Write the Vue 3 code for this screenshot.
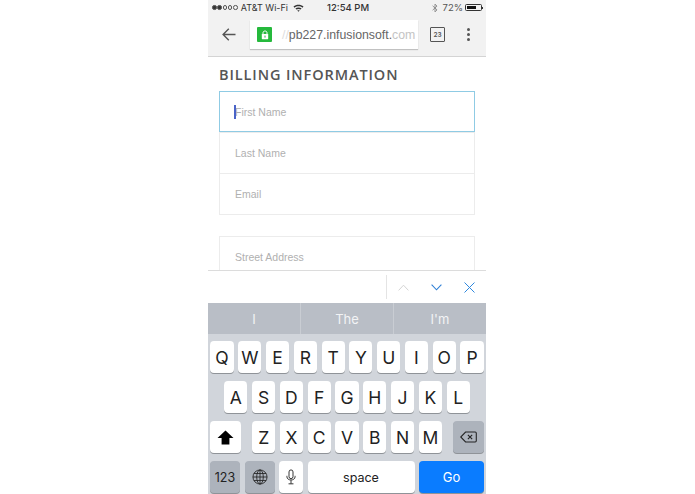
<script setup>
const rowOne = ['Q', 'W', 'E', 'R', 'T', 'Y', 'U', 'I', 'O', 'P']
const rowTwo = ['A', 'S', 'D', 'F', 'G', 'H', 'J', 'K', 'L']
const rowThree = ['Z', 'X', 'C', 'V', 'B', 'N', 'M']
const suggestions = ['I', 'The', "I'm"]
</script>

<template>
  <div class="page">
    <div class="phone">
      <div class="status">
        <div class="status-left">
          <span class="dots"><i class="on"></i><i class="on"></i><i></i><i></i><i></i></span>
          <span>AT&amp;T Wi-Fi</span>
          <svg class="wifi" width="11" height="8" viewBox="0 0 11 8">
            <path d="M0.5 2.6C3.3 0.2 7.7 0.2 10.5 2.6L9.5 3.7C7.2 1.8 3.8 1.8 1.5 3.7Z" fill="#333"/>
            <path d="M2.4 4.6C4 3.2 7 3.2 8.6 4.6L7.6 5.6C6.4 4.7 4.6 4.7 3.4 5.6Z" fill="#333"/>
            <path d="M4.3 6.5C5 6 6 6 6.7 6.5L5.5 7.8Z" fill="#333"/>
          </svg>
        </div>
        <div class="status-time">12:54 PM</div>
        <div class="status-right">
          <svg width="6" height="10" viewBox="0 0 6 10" fill="none" stroke="#888" stroke-width="0.9">
            <path d="M0.6 2.8L5 6.9L3 8.9V1.1L5 3.1L0.6 7.2"/>
          </svg>
          <span>72%</span>
          <span class="battery"><span class="battery-fill"></span></span>
        </div>
      </div>

      <div class="toolbar">
        <svg class="back" width="14" height="13" viewBox="0 0 14 13" fill="none" stroke="#555" stroke-width="1.4">
          <path d="M13.5 6.5H1.2M6.8 0.8L1.1 6.5L6.8 12.2"/>
        </svg>
        <div class="url">
          <span class="lock">
            <svg width="8" height="10" viewBox="0 0 8 10">
              <path d="M2 4.2V2.8C2 0.4 6 0.4 6 2.8V4.2" fill="none" stroke="#fff" stroke-width="1"/>
              <rect x="0.8" y="4" width="6.4" height="5.2" rx="0.6" fill="#fff"/>
              <rect x="3.5" y="5.6" width="1" height="2" fill="#25b93c"/>
            </svg>
          </span>
          <span class="url-text"><span class="url-slashes">//</span>pb227.infusionsoft.<span class="url-fade">com</span></span>
        </div>
        <span class="tabs">23</span>
        <span class="menu"><i></i><i></i><i></i></span>
      </div>

      <div class="content">
        <h2 class="title">BILLING INFORMATION</h2>
        <div class="group">
          <div class="field focused"><span class="caret"></span>First Name</div>
          <div class="field">Last Name</div>
          <div class="field">Email</div>
        </div>
        <div class="group second">
          <div class="field">Street Address</div>
        </div>
      </div>

      <div class="accessory">
        <span class="accessory-divider"></span>
        <svg class="acc-icon" width="11" height="7" viewBox="0 0 11 7" fill="none" stroke="#d4d4d4" stroke-width="1">
          <path d="M0.6 6.4L5.5 1.2L10.4 6.4"/>
        </svg>
        <svg class="acc-icon" width="11" height="7" viewBox="0 0 11 7" fill="none" stroke="#2f7fd6" stroke-width="1.1">
          <path d="M0.6 0.6L5.5 5.8L10.4 0.6"/>
        </svg>
        <svg class="acc-icon" width="11" height="11" viewBox="0 0 11 11" fill="none" stroke="#2f88de" stroke-width="1">
          <path d="M0.5 0.5L10.5 10.5M10.5 0.5L0.5 10.5"/>
        </svg>
      </div>

      <div class="suggestions">
        <div v-for="word in suggestions" :key="word" class="suggestion">{{ word }}</div>
      </div>

      <div class="keyboard">
        <div class="row">
          <span v-for="k in rowOne" :key="k" class="key">{{ k }}</span>
        </div>
        <div class="row">
          <span v-for="k in rowTwo" :key="k" class="key">{{ k }}</span>
        </div>
        <div class="row row-three">
          <span class="key shift">
            <svg width="17" height="15" viewBox="0 0 17 15"><path d="M8.5 0.5L16.5 8H12.4V14.5H4.6V8H0.5Z" fill="#000"/></svg>
          </span>
          <div class="letters">
            <span v-for="k in rowThree" :key="k" class="key">{{ k }}</span>
          </div>
          <span class="key dark del">
            <svg width="17" height="12" viewBox="0 0 19 13" fill="none" stroke="#222" stroke-width="1.2">
              <path d="M6.2 1H17A1.2 1.2 0 0 1 18.2 2.2V10.8A1.2 1.2 0 0 1 17 12H6.2L0.8 6.5Z"/>
              <path d="M8.8 4L13.6 9M13.6 4L8.8 9"/>
            </svg>
          </span>
        </div>
        <div class="row row-four">
          <span class="key dark num">123</span>
          <span class="key dark globe">
            <svg width="16" height="16" viewBox="0 0 17 17" fill="none" stroke="#222" stroke-width="0.9">
              <circle cx="8.5" cy="8.5" r="7.5"/>
              <ellipse cx="8.5" cy="8.5" rx="3.5" ry="7.5"/>
              <path d="M8.5 1V16M1 8.5H16M2 4.8H15M2 12.2H15"/>
            </svg>
          </span>
          <span class="key mic">
            <svg width="10" height="16" viewBox="0 0 11 17" fill="none" stroke="#222" stroke-width="1">
              <rect x="3.3" y="0.7" width="4.4" height="9.6" rx="2.2" fill="none"/>
              <path d="M1 7.2V8.2C1 13 10 13 10 8.2V7.2M5.5 12V15.8M2.8 16H8.2"/>
            </svg>
          </span>
          <span class="key space">space</span>
          <span class="key go">Go</span>
        </div>
      </div>
    </div>
  </div>
</template>

<style scoped>
.page {
  width: 695px;
  height: 494px;
  padding-left: 208px;
  box-sizing: border-box;
  overflow: hidden;
  background: #fff;
  font-family: Inter, "Liberation Sans", sans-serif;
}
.phone {
  width: 278px;
  height: 494px;
  display: flex;
  flex-direction: column;
  background: #fff;
}
.status {
  height: 14px;
  flex: none;
  background: #f2f2f2;
  display: flex;
  align-items: center;
  justify-content: space-between;
  padding: 1px 4px 0 4px;
  box-sizing: border-box;
  font-size: 9px;
  color: #333;
  position: relative;
}
.status-left {
  display: flex;
  align-items: center;
  gap: 3px;
}
.dots {
  display: flex;
  gap: 0.8px;
}
.dots i {
  width: 4.5px;
  height: 4.5px;
  border-radius: 50%;
  border: 0.6px solid #555;
  box-sizing: border-box;
}
.dots i.on {
  background: #333;
}
.wifi {
  margin-left: 2px;
}
.status-time {
  position: absolute;
  left: 119px;
  font-weight: 500;
  font-size: 9.5px;
}
.status-right {
  display: flex;
  align-items: center;
  gap: 2px;
  font-size: 9.5px;
  color: #555;
}
.status-right svg {
  margin-right: 3px;
}
.battery {
  width: 17px;
  height: 7px;
  border: 0.7px solid #333;
  border-radius: 1.5px;
  box-sizing: border-box;
  padding: 0.7px;
  display: block;
  position: relative;
}
.battery::after {
  content: "";
  position: absolute;
  right: -2px;
  top: 1.5px;
  width: 1.2px;
  height: 2.6px;
  background: #333;
}
.battery-fill {
  display: block;
  width: 72%;
  height: 100%;
  background: #111;
}
.toolbar {
  height: 43px;
  flex: none;
  box-sizing: border-box;
  background: #f2f2f2;
  border-bottom: 1px solid #d4d4d4;
  display: flex;
  align-items: center;
  padding-bottom: 1px;
}
.back {
  margin-left: 14px;
  flex: none;
}
.url {
  margin-left: 14px;
  width: 168px;
  height: 29px;
  background: #fff;
  box-shadow: 0 1px 1px rgba(0, 0, 0, 0.2);
  display: flex;
  align-items: center;
  padding-left: 7px;
  box-sizing: border-box;
  flex: none;
}
.lock {
  width: 15px;
  height: 15px;
  background: #25b93c;
  border-radius: 1px;
  display: flex;
  align-items: center;
  justify-content: center;
  flex: none;
}
.url-text {
  margin-left: 10px;
  font-family: "Liberation Sans", sans-serif;
  font-size: 12.3px;
  color: #666;
  white-space: nowrap;
}
.url-slashes {
  color: #ddd;
}
.url-fade {
  color: #c4c4c4;
}
.tabs {
  margin-left: 12px;
  width: 13px;
  height: 13px;
  border: 1px solid #555;
  border-radius: 1px;
  font-size: 6.5px;
  font-weight: 600;
  color: #555;
  display: flex;
  align-items: center;
  justify-content: center;
  flex: none;
}
.menu {
  margin-left: 22px;
  display: flex;
  flex-direction: column;
  gap: 2px;
}
.menu i {
  width: 3px;
  height: 3px;
  border-radius: 50%;
  background: #555;
}
.content {
  flex: 1;
  min-height: 0;
  overflow: hidden;
  padding: 9px 11px 0 11px;
}
.title {
  margin: 0 0 7px;
  font-family: "Open Sans", sans-serif;
  font-size: 14.5px;
  line-height: 18px;
  font-weight: 600;
  letter-spacing: 0.9px;
  color: #555;
  white-space: nowrap;
}
.group {
  border: 1px solid #ececec;
  border-top: none;
  width: 256px;
  box-sizing: border-box;
}
.group.second {
  margin-top: 21px;
  border-top: 1px solid #ececec;
}
.group.second .field {
  height: 40px;
}
.field {
  height: 41px;
  box-sizing: border-box;
  display: flex;
  align-items: center;
  padding-left: 15px;
  font-family: "Liberation Sans", sans-serif;
  font-size: 10.5px;
  color: #b0b0b0;
  position: relative;
}
.field + .field {
  border-top: 1px solid #ececec;
}
.field.focused {
  margin: 0 -1px;
  padding-left: 15px;
  border: 1px solid #8fcbe4;
}
.caret {
  width: 1.5px;
  height: 14px;
  background: #4a64c8;
  position: absolute;
  left: 14px;
  top: 13px;
}
.accessory {
  height: 33px;
  flex: none;
  box-sizing: border-box;
  border-top: 1px solid #dcdcdc;
  background: #fff;
  display: flex;
  align-items: center;
  position: relative;
  padding-left: 190px;
  gap: 22px;
}
.accessory-divider {
  position: absolute;
  left: 178px;
  top: 4px;
  bottom: 4px;
  width: 1px;
  background: #e4e4e4;
}
.acc-icon {
  flex: none;
}
.suggestions {
  height: 31px;
  flex: none;
  background: #b9bec6;
  display: flex;
}
.suggestion {
  flex: 1;
  display: flex;
  align-items: center;
  justify-content: center;
  font-size: 13px;
  color: #f2f3f5;
}
.suggestion + .suggestion {
  border-left: 1px solid #c9cdd3;
}
.keyboard {
  flex: none;
  height: 160px;
  background: #d1d5db;
  padding: 7px 2px 1px;
  box-sizing: border-box;
  display: flex;
  flex-direction: column;
  gap: 8px;
}
.row {
  height: 32px;
  display: flex;
  justify-content: center;
  gap: 4.6px;
}
.letters {
  display: flex;
  gap: 4.6px;
}
.row-three {
  justify-content: space-between;
}
.row-four {
  gap: 4.5px;
  justify-content: flex-start;
}
.key {
  width: 23.2px;
  height: 32px;
  flex: none;
  background: #fff;
  border-radius: 4px;
  box-shadow: 0 1px 0 #8f9398;
  display: flex;
  align-items: center;
  justify-content: center;
  font-size: 17.5px;
  color: #222;
}
.key.dark {
  background: #adb3bc;
}
.shift {
  width: 31px;
}
.del {
  width: 31px;
}
.num {
  width: 30px;
  font-size: 12.5px;
}
.globe {
  width: 30px;
}
.mic {
  width: 24px;
}
.space {
  width: 107px;
  font-size: 12.5px;
}
.go {
  width: 65px;
  background: #0a7cff;
  color: #fff;
  font-size: 13px;
}
</style>
